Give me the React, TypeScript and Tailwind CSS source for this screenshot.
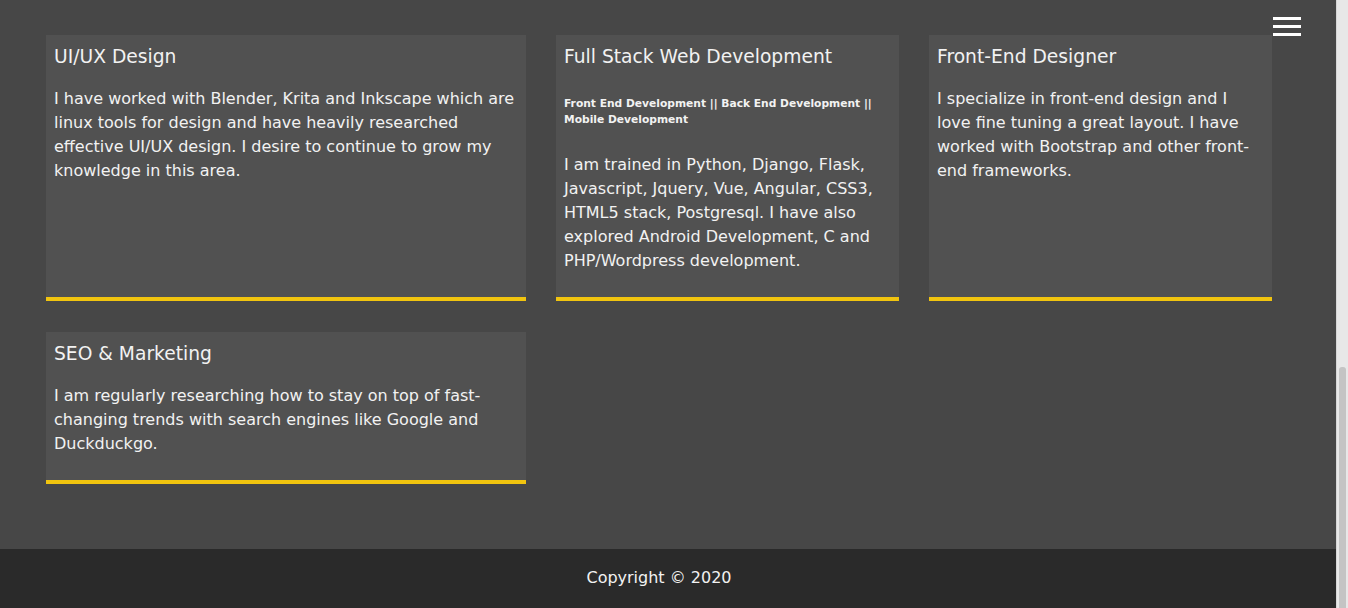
const services = [
  {
    title: 'UI/UX Design',
    text: 'I have worked with Blender, Krita and Inkscape which are linux tools for design and have heavily researched effective UI/UX design. I desire to continue to grow my knowledge in this area.',
  },
  {
    title: 'Full Stack Web Development',
    sub: 'Front End Development || Back End Development || Mobile Development',
    text: 'I am trained in Python, Django, Flask, Javascript, Jquery, Vue, Angular, CSS3, HTML5 stack, Postgresql. I have also explored Android Development, C and PHP/Wordpress development.',
  },
  {
    title: 'Front-End Designer',
    text: 'I specialize in front-end design and I love fine tuning a great layout. I have worked with Bootstrap and other front-end frameworks.',
  },
  {
    title: 'SEO & Marketing',
    text: 'I am regularly researching how to stay on top of fast-changing trends with search engines like Google and Duckduckgo.',
  },
];

type Service = (typeof services)[number];

const ServiceCard = ({ service }: { service: Service }) => (
  <div className="bg-[#515151] border-b-4 border-[#f1c40f] px-2 pt-[10px] pb-[24px] text-[#f2f2f2]">
    <h3
      className={`text-[18.7px] leading-[24px] font-normal ${
        service.sub ? 'mb-[27px]' : 'mb-[18px]'
      }`}
    >
      {service.title}
    </h3>
    {service.sub && (
      <h6 className="text-[10.7px] leading-[16px] font-bold mb-[25px]">{service.sub}</h6>
    )}
    <p className="text-[16px] leading-[24px]">{service.text}</p>
  </div>
);

export default function App() {
  return (
    <div className="flex h-[608px] w-[1348px] overflow-hidden font-['DejaVu_Sans',sans-serif]">
      <div className="relative flex w-[1336px] flex-col">
        <main className="flex-1 bg-[#474747] pt-[35px] pl-[46px]">
          <div className="grid grid-cols-[480px_343px_343px] items-stretch gap-x-[30px] gap-y-[31px]">
            {services.map((s) => (
              <ServiceCard key={s.title} service={s} />
            ))}
          </div>
        </main>
        <footer className="flex h-[59px] items-center justify-center bg-[#2a2a2a] pr-[18px] pb-[2px] text-[16px] text-[#f2f2f2]">
          Copyright © 2020
        </footer>
        <button className="absolute top-[17px] right-[35px] flex w-[28px] flex-col gap-[5px]">
          <span className="block h-[3px] w-full bg-white" />
          <span className="block h-[3px] w-full bg-white" />
          <span className="block h-[3px] w-full bg-white" />
        </button>
      </div>
      <div className="flex w-[12px] flex-col border-l border-[#d6d6d6] bg-[#e8e8e8] pt-[367px] pl-[2px] pr-[2px]">
        <div className="flex-1 rounded-t-[3px] bg-[#c4c4c4]" />
      </div>
    </div>
  );
}
